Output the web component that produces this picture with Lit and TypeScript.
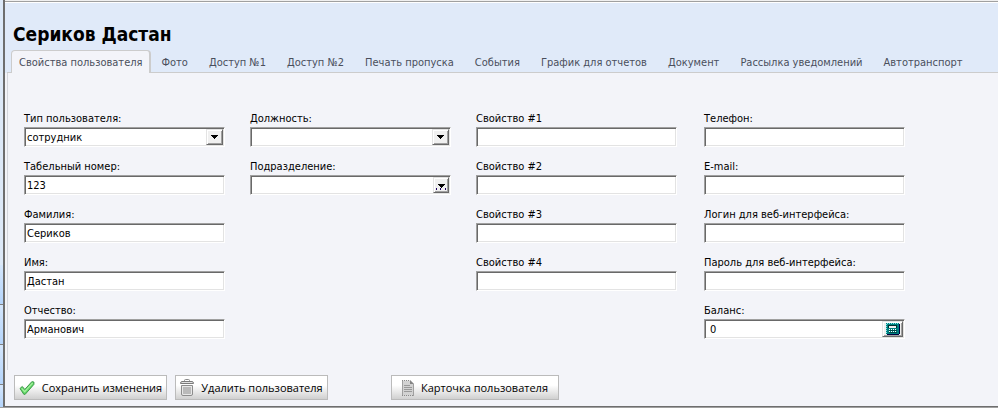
import { LitElement, html, css, svg, nothing } from "lit";
import { customElement, property, state } from "lit/decorators.js";
import { classMap } from "lit/directives/class-map.js";

type Kind = "text" | "select" | "lookup" | "number";

interface Field {
  id: string;
  label: string;
  value?: string;
  kind?: Kind;
}

const TABS = [
  "Свойства пользователя",
  "Фото",
  "Доступ №1",
  "Доступ №2",
  "Печать пропуска",
  "События",
  "График для отчетов",
  "Документ",
  "Рассылка уведомлений",
  "Автотранспорт",
];

const COLUMNS: Field[][] = [
  [
    { id: "type", label: "Тип пользователя:", value: "сотрудник", kind: "select" },
    { id: "number", label: "Табельный номер:", value: "123" },
    { id: "surname", label: "Фамилия:", value: "Сериков" },
    { id: "name", label: "Имя:", value: "Дастан" },
    { id: "patronymic", label: "Отчество:", value: "Арманович" },
  ],
  [
    { id: "position", label: "Должность:", kind: "select" },
    { id: "department", label: "Подразделение:", kind: "lookup" },
  ],
  [
    { id: "prop1", label: "Свойство #1" },
    { id: "prop2", label: "Свойство #2" },
    { id: "prop3", label: "Свойство #3" },
    { id: "prop4", label: "Свойство #4" },
  ],
  [
    { id: "phone", label: "Телефон:" },
    { id: "email", label: "E-mail:" },
    { id: "login", label: "Логин для веб-интерфейса:" },
    { id: "password", label: "Пароль для веб-интерфейса:" },
    { id: "balance", label: "Баланс:", value: "0", kind: "number" },
  ],
];

const arrow = svg`<path d="M0 0h7v1h-1v1h-1v1h-1v1h-1v-1h-1v-1h-1v-1h-1z" fill="#000"/>`;

const arrowIcon = html`<svg width="7" height="4" viewBox="0 0 7 4" shape-rendering="crispEdges" aria-hidden="true">${arrow}</svg>`;

const lookupIcon = html`<svg width="10" height="6" viewBox="0 0 10 6" shape-rendering="crispEdges" aria-hidden="true">
  <g transform="translate(2 0)">${arrow}</g>
  <path d="M0 4h1v2h-1zM4 4h1v2h-1zM9 4h1v2h-1z" fill="#200060"/>
</svg>`;

const calcIcon = html`<svg width="14" height="12" viewBox="0 0 14 12" shape-rendering="crispEdges" aria-hidden="true">
  <path d="M1 1h13v10h-1v1h-12z" fill="#000040"/>
  <path d="M0 0h13v11h-13z" fill="#008080"/>
  <path d="M1 0h1v1h-1zM3 0h1v1h-1zM5 0h1v1h-1zM7 0h1v1h-1zM9 0h1v1h-1zM11 0h1v1h-1zM0 1h1v1h-1zM0 3h1v1h-1zM0 5h1v1h-1zM0 7h1v1h-1zM0 9h1v1h-1z" fill="#7fe8e8"/>
  <path d="M2 2h9v3h-9z" fill="#003030"/>
  <path d="M3 3h7v2h-7z" fill="#f0f0f0"/>
  <path d="M3 6h1v1h-1zM5 6h1v1h-1zM7 6h1v1h-1zM9 6h1v1h-1zM3 8h1v1h-1zM5 8h1v1h-1zM7 8h1v1h-1zM9 8h1v1h-1z" fill="#fff"/>
  <path d="M3 7h8v1h-8zM3 9h8v1h-8z" fill="#004848"/>
</svg>`;

const checkIcon = html`<svg width="16" height="14" viewBox="0 0 16 14" aria-hidden="true">
  <path d="M1 7.500 3.300 5.500 5.800 8.500 12.800.700 14.900 1 14.900 3.400 6.200 13.300 4.800 13.300Z" fill="#62d868" stroke="#3c9a48" stroke-linejoin="round"/>
  <path d="M2.600 7.400 5.700 10.600 13.700 1.900" fill="none" stroke="#a8f0a0" stroke-width="1.200"/>
</svg>`;

const trashIcon = html`<svg width="14" height="17" viewBox="0 0 14 17" aria-hidden="true">
  <path d="M4.500 2.500V1.500Q4.500.500 5.500.500H8.500Q9.500.500 9.500 1.500V2.500" fill="none" stroke="#8a8a8a"/>
  <path d="M.5 4.500Q.5 2.500 2 2.500H12Q13.500 2.500 13.500 4.500Z" fill="#e2e2e2" stroke="#7c7c7c"/>
  <path d="M1.500 6.500H12.500V15Q12.500 16.500 11 16.500H3Q1.500 16.500 1.500 15Z" fill="#e8e8e8" stroke="#8c8c8c"/>
  <path d="M4 8V15M6 8V15M8 8V15M10 8V15" stroke="#8c8c8c"/>
</svg>`;

const cardIcon = html`<svg width="12" height="16" viewBox="0 0 12 16" aria-hidden="true">
  <path d="M0 0 1 1 2 0 3 1 4 0 5 1 6 0 7 1 8 0 12 4V16L11 15 10 16 9 15 8 16 7 15 6 16 5 15 4 16 3 15 2 16 1 15 0 16Z" fill="#d2d2d2"/>
  <path d="M.5 0V16M11.500 4V16" stroke="#a0a0a0"/>
  <path d="M0 .5H8M0 15.500H12" stroke="#8a8a8a" stroke-dasharray="1 1"/>
  <path d="M8 0V4H12Z" fill="#858585"/>
  <path d="M2 5.500H8M2 7.500H10M2 9.500H10M2 11.500H10" stroke="#999"/>
</svg>`;

@customElement("form-field")
class FormField extends LitElement {
  @property({ attribute: false }) field!: Field;

  static styles = css`
    :host {
      display: block;
      max-width: 201px;
    }
    .label {
      display: block;
      height: 16px;
      line-height: 16px;
      white-space: nowrap;
    }
    .box {
      display: grid;
      grid-template-columns: minmax(0, 1fr) auto;
      height: 20px;
      box-sizing: border-box;
      padding: 1px;
      border: 1px solid;
      border-color: #a0a0a0 #fff #fff #a0a0a0;
      background: #fff;
      box-shadow: inset 1px 1px #696969, inset -1px -1px #e3e3e3;
    }
    .control {
      grid-area: 1 / 1 / 2 / 3;
      box-sizing: border-box;
      min-width: 0;
      width: 100%;
      height: 16px;
      margin: 0;
      padding: 1px 1px 0;
      border: 0;
      outline: 0;
      appearance: none;
      background: transparent;
      color: #000;
      font: inherit;
      line-height: 15px;
    }
    .control.number {
      padding-left: 4px;
    }
    .knob {
      grid-area: 1 / 2;
      display: flex;
      align-items: center;
      justify-content: center;
      width: 17px;
      height: 16px;
      box-sizing: border-box;
      padding: 0;
      border: 1px solid;
      border-color: #e3e3e3 #696969 #696969 #e3e3e3;
      background: #f0f0f0;
      box-shadow: inset 1px 1px #fff, inset -1px -1px #a0a0a0;
    }
    .passive {
      pointer-events: none;
    }
    .wide {
      width: 21px;
    }
    .low {
      width: 16px;
      padding-top: 3px;
    }
  `;

  private renderControl() {
    const { id, value = "", kind = "text" } = this.field;
    if (kind === "select") {
      return html`<select class="control" id=${id}><option>${value}</option></select>
        <span class="knob passive">${arrowIcon}</span>`;
    }
    return html`<input class=${classMap({ control: true, number: kind === "number" })} id=${id} type=${id === "password" ? "password" : "text"} .value=${value}>
      ${kind === "lookup" ? html`<button class="knob low" type="button" aria-label="Выбрать">${lookupIcon}</button>` : nothing}
      ${kind === "number" ? html`<button class="knob wide" type="button" aria-label="Калькулятор">${calcIcon}</button>` : nothing}`;
  }

  render() {
    return html`<label class="label" for=${this.field.id}>${this.field.label}</label>
      <div class="box">${this.renderControl()}</div>`;
  }
}

@customElement("app-root")
class AppRoot extends LitElement {
  @state() private active = 0;

  static styles = css`
    :host {
      display: block;
      color: #000;
      font: 11px/16px "DejaVu Sans Condensed", "DejaVu Sans", sans-serif;
    }
    .frame {
      display: grid;
      grid-template-columns: 3px minmax(0, 1fr);
      border-bottom: 1px solid #a0a0a0;
    }
    .strip {
      display: flex;
      flex-direction: column;
      justify-content: flex-end;
      background: #dde9f8;
    }
    .cell {
      height: 39px;
      border-bottom: 1px solid #808080;
      background: linear-gradient(#d4e6fc, #b4d4fb);
    }
    .cell.last {
      height: 22px;
      border: 0;
    }
    .window {
      border-left: 2px solid #6e6e6e;
      border-bottom: 1px solid #6e6e6e;
      background: #f3f4f9;
    }
    .header {
      padding-top: 19px;
      border-top: 1px solid #f0f0f0;
      background: #e0eaf9;
      box-shadow: inset 0 1px #a0a0a0, inset 0 2px #fff;
    }
    .title {
      margin: 0;
      padding: 0 8px;
      font-size: 19px;
      line-height: 28px;
    }
    .tabs {
      display: flex;
      gap: 1px;
      padding: 2px 4px 0;
      margin-left: 2px;
      box-shadow: inset 0 -1px #ccc;
    }
    .tab {
      height: 23px;
      padding: 3px 10px 0;
      border: 0;
      background: transparent;
      color: #4a4f5c;
      font: inherit;
      white-space: nowrap;
    }
    .tab.active {
      padding: 2px 6px 0 7px;
      border: 1px solid #ccc;
      border-right-width: 2px;
      border-bottom: 0;
      border-radius: 4px 4px 0 0;
      background: #f3f4f9;
    }
    .panel {
      display: grid;
      grid-template-columns: 226fr 226fr 228fr 201fr;
      margin-left: 2px;
      padding: 38px 93px 31px 16px;
      border-left: 1px solid #d4d6dc;
    }
    .column {
      display: flex;
      flex-direction: column;
      gap: 12px;
    }
    .actions {
      display: flex;
      gap: 8px;
      padding: 5px 9px 6px;
    }
    .action {
      display: flex;
      align-items: center;
      justify-content: center;
      gap: 7px;
      min-width: 153px;
      height: 25px;
      padding: 0 3px;
      border: 1px solid #bbb;
      background: linear-gradient(#fff 40%, #d0d0d0);
      color: #000;
      font: 11px/16px "Open Sans", sans-serif;
      white-space: nowrap;
    }
    .action.card {
      min-width: 168px;
      margin-left: 55px;
    }
  `;

  render() {
    return html`<main class="frame">
      <div class="strip">
        <div class="cell"></div>
        <div class="cell"></div>
        <div class="cell"></div>
        <div class="cell last"></div>
      </div>
      <div class="window">
        <header class="header">
          <h1 class="title">Сериков Дастан</h1>
          <div class="tabs" role="tablist">
            ${TABS.map(
              (name, i) => html`<button
                class=${classMap({ tab: true, active: i === this.active })}
                type="button"
                role="tab"
                aria-selected=${i === this.active}
                @click=${() => (this.active = i)}
              >${name}</button>`
            )}
          </div>
        </header>
        <section class="panel">
          ${COLUMNS.map(
            (fields) => html`<div class="column">
              ${fields.map((field) => html`<form-field .field=${field}></form-field>`)}
            </div>`
          )}
        </section>
        <footer class="actions">
          <button class="action" type="button">${checkIcon}Сохранить изменения</button>
          <button class="action" type="button">${trashIcon}Удалить пользователя</button>
          <button class="action card" type="button">${cardIcon}Карточка пользователя</button>
        </footer>
      </div>
    </main>`;
  }
}
